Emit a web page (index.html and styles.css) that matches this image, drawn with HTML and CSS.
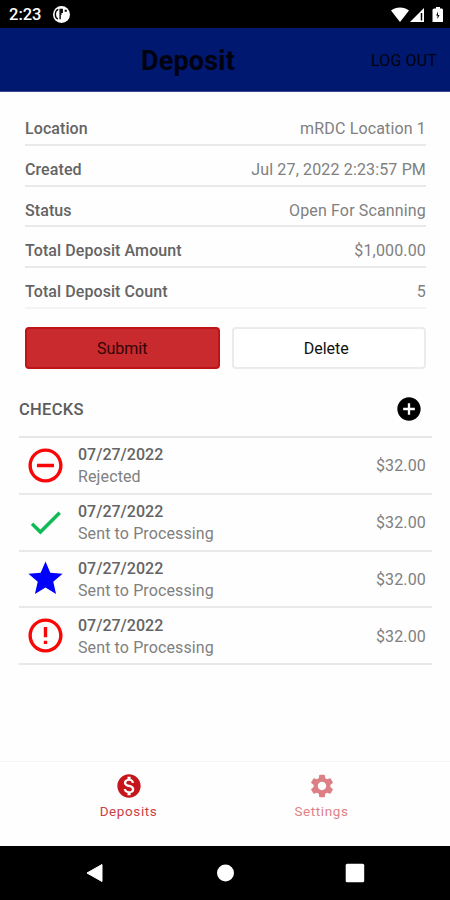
FILE: index.html
```html
<!DOCTYPE html>
<html lang="en">
<head>
    <meta charset="UTF-8">
    <meta name="viewport" content="width=device-width, initial-scale=1">
    <title>Deposit</title>
    <link rel="stylesheet" href="styles.css">
</head>
<body>

    <div class="status-bar">
        <span class="clock">2:23</span>
        <svg class="app-icon" viewBox="0 0 16 16">
            <circle cx="8" cy="8" r="8" fill="#fff"/>
            <path d="M6.700 2.500v10M5 3.200C3 4 2.200 6 2.200 8s.8 3.500 2.300 4.300" fill="none" stroke="#000" stroke-width="1.300"/>
            <path d="M7 2.500h2.300v4H8v2H7zM11 3.500h2v2h-2z" fill="#000"/>
        </svg>
        <svg class="status-icons" viewBox="0 0 52 16">
            <path d="M0 3.500C5 -.6 13 -.6 18 3.500L9 15z" fill="#fff"/>
            <path d="M33 1v14H19z" fill="#fff"/>
            <path d="M30.500 6v7.500" stroke="#000" stroke-width="1.500"/>
            <path d="M43 1.500h2V0h4v1.500h2l1 1V15H41.500V2.500z" fill="#fff"/>
            <path d="M47 4.500l-1.800 4h1.300V12l2-4H47z" fill="#000"/>
        </svg>
    </div>

    <div class="header">
        <h1>Deposit</h1>
        <a class="logout">LOG OUT</a>
    </div>

    <div class="content">
        <div class="details">
            <div class="detail-row"><b>Location</b><span>mRDC Location 1</span></div>
            <div class="detail-row"><b>Created</b><span>Jul 27, 2022 2:23:57 PM</span></div>
            <div class="detail-row"><b>Status</b><span>Open For Scanning</span></div>
            <div class="detail-row"><b>Total Deposit Amount</b><span>$1,000.00</span></div>
            <div class="detail-row"><b>Total Deposit Count</b><span>5</span></div>
        </div>

        <div class="buttons">
            <button class="submit">Submit</button>
            <button class="delete">Delete</button>
        </div>

        <div class="checks-header">
            <h2>CHECKS</h2>
            <svg class="add-icon" viewBox="0 0 24 24"><path d="M12 2C6.480 2 2 6.480 2 12s4.480 10 10 10 10-4.480 10-10S17.520 2 12 2zm5 11h-4v4h-2v-4H7v-2h4V7h2v4h4v2z"/></svg>
        </div>

        <div class="check-row">
            <svg class="check-icon red" viewBox="0 0 24 24"><path d="M7 11v2h10v-2H7zm5-9C6.480 2 2 6.480 2 12s4.480 10 10 10 10-4.480 10-10S17.520 2 12 2zm0 18c-4.410 0-8-3.590-8-8s3.590-8 8-8 8 3.590 8 8-3.590 8-8 8z"/></svg>
            <div class="check-info"><b>07/27/2022</b><span>Rejected</span></div>
            <span class="amount">$32.00</span>
        </div>
        <div class="check-row">
            <svg class="check-icon green" viewBox="0 0 24 24"><path d="M9 16.170L4.830 12l-1.420 1.410L9 19 21 7l-1.410-1.410z"/></svg>
            <div class="check-info"><b>07/27/2022</b><span>Sent to Processing</span></div>
            <span class="amount">$32.00</span>
        </div>
        <div class="check-row">
            <svg class="check-icon blue" viewBox="0 0 24 24"><path d="M12 17.270L18.180 21l-1.640-7.030L22 9.240l-7.190-.61L12 2 9.190 8.630 2 9.240l5.460 4.730L5.820 21z"/></svg>
            <div class="check-info"><b>07/27/2022</b><span>Sent to Processing</span></div>
            <span class="amount">$32.00</span>
        </div>
        <div class="check-row">
            <svg class="check-icon red" viewBox="0 0 24 24"><path d="M11 15h2v2h-2zm0-8h2v6h-2zm1-5C6.480 2 2 6.480 2 12s4.480 10 10 10 10-4.480 10-10S17.520 2 12 2zm0 18c-4.410 0-8-3.590-8-8s3.590-8 8-8 8 3.590 8 8-3.590 8-8 8z"/></svg>
            <div class="check-info"><b>07/27/2022</b><span>Sent to Processing</span></div>
            <span class="amount">$32.00</span>
        </div>
    </div>

    <div class="tabs">
        <div class="tab active">
            <svg viewBox="0 0 24 24"><path d="M12 2C6.480 2 2 6.480 2 12s4.480 10 10 10 10-4.480 10-10S17.520 2 12 2zm1.410 16.090V20h-2.670v-1.930c-1.710-.36-3.160-1.460-3.270-3.400h1.960c.1 1.050.82 1.870 2.650 1.870 1.960 0 2.400-.98 2.400-1.590 0-.83-.44-1.610-2.670-2.140-2.480-.6-4.180-1.620-4.180-3.670 0-1.720 1.390-2.840 3.110-3.210V4h2.670v1.950c1.860.45 2.790 1.860 2.850 3.390H14.300c-.05-1.110-.64-1.870-2.220-1.870-1.500 0-2.400.68-2.400 1.640 0 .84.65 1.390 2.670 1.910s4.180 1.390 4.180 3.910c-.01 1.830-1.380 2.830-3.120 3.160z"/></svg>
            <span>Deposits</span>
        </div>
        <div class="tab">
            <svg viewBox="0 0 24 24"><path d="M19.140 12.940c.04-.3.060-.61.060-.94 0-.32-.02-.64-.07-.94l2.030-1.580c.18-.14.230-.41.120-.61l-1.920-3.320c-.12-.22-.37-.29-.59-.22l-2.390.96c-.5-.38-1.030-.7-1.620-.94l-.36-2.540c-.04-.24-.24-.41-.48-.41h-3.840c-.24 0-.43.170-.47.410l-.36 2.540c-.59.240-1.130.570-1.620.940l-2.390-.96c-.22-.08-.47 0-.59.220L2.740 8.870c-.12.210-.08.470.120.610l2.030 1.580c-.05.300-.09.630-.09.940s.02.640.07.940l-2.030 1.580c-.18.140-.23.410-.12.610l1.920 3.320c.12.220.37.290.59.220l2.390-.96c.5.380 1.030.700 1.620.940l.36 2.540c.05.240.24.410.48.410h3.840c.24 0 .44-.17.470-.41l.36-2.540c.59-.24 1.130-.56 1.620-.94l2.390.96c.22.080.47 0 .59-.22l1.920-3.320c.12-.22.070-.47-.12-.61l-2.010-1.580zM12 15.600c-1.980 0-3.600-1.620-3.600-3.600s1.620-3.600 3.600-3.600 3.600 1.620 3.600 3.600-1.620 3.600-3.600 3.600z"/></svg>
            <span>Settings</span>
        </div>
    </div>

    <div class="nav-bar">
        <svg viewBox="0 0 20 20"><path d="M2 10L17 1.500v17z" stroke="#fff" stroke-linejoin="round"/></svg>
        <svg viewBox="0 0 20 20"><circle cx="10.500" cy="10" r="8.500"/></svg>
        <svg viewBox="0 0 20 20"><rect x=".7" y=".7" width="18.500" height="18.500" rx="1.500"/></svg>
    </div>

</body>
</html>
```

FILE: styles.css
```css
* {
    box-sizing: border-box;
}
body {
    margin: 0;
    height: 900px;
    display: flex;
    flex-direction: column;
    font-family: Roboto, sans-serif;
    font-size: 16px;
    color: #808080;
    background: #fefefe;
    overflow: hidden;
}
b {
    font-weight: 500;
    color: #646464;
}
.status-bar {
    height: 28px;
    display: flex;
    align-items: center;
    padding: 1px 7px 0 9px;
    background: #000;
}
.clock {
    color: #fff;
    font-size: 16.5px;
    font-weight: 500;
}
.app-icon {
    width: 17px;
    height: 17px;
    margin-left: 12px;
}
.status-icons {
    width: 52px;
    height: 16px;
    margin-left: auto;
}
.header {
    height: 64px;
    display: grid;
    grid-template-columns: 1fr auto 1fr;
    align-items: center;
    padding: 2px 13px 0 0;
    background: #00186f;
    border-bottom: 1px solid #3b4a8e;
    color: #00020f;
}
.header h1 {
    grid-column: 2;
    margin: 0 0 0 -61px;
    font-size: 27px;
    font-weight: 700;
    letter-spacing: 0.2px;
}
.logout {
    text-align: right;
    font-size: 16px;
    letter-spacing: 0.15px;
}
.content {
    flex: 1;
    padding: 13px 18px 0 19px;
}
.details {
    padding: 0 6px;
}
.detail-row {
    height: 40.8px;
    display: flex;
    justify-content: space-between;
    align-items: center;
    padding-top: 8.4px;
    border-bottom: 2px solid #e9e9e9;
    letter-spacing: 0.15px;
}
.detail-row b {
    letter-spacing: 0.08px;
}
.detail-row:last-child {
    border-bottom-color: #f4f4f4;
}
.buttons {
    display: grid;
    grid-template-columns: 1fr 1fr;
    gap: 12px;
    padding: 18px 6px 0;
}
.buttons button {
    height: 42px;
    padding: 2px 0 0;
    border-radius: 4px;
    font-family: inherit;
    font-size: 16px;
}
.buttons .submit {
    background: #c82a2e;
    border: 2px solid #c01318;
    color: #310405;
}
.buttons .delete {
    background: #fff;
    border: 2px solid #ebebeb;
    color: #111;
    padding-right: 5px;
}
.checks-header {
    height: 69px;
    display: flex;
    justify-content: space-between;
    align-items: center;
    padding: 13px 9px 0 0;
    border-bottom: 2px solid #e6e6e6;
}
.checks-header h2 {
    margin: 0;
    padding-top: 1px;
    font-size: 16.5px;
    font-weight: 500;
    letter-spacing: 0.3px;
    color: #5c5c5c;
}
.add-icon {
    width: 28px;
    height: 28px;
}
.check-row {
    height: 56.8px;
    display: flex;
    align-items: center;
    padding: 0 6px 0 6px;
    border-bottom: 2px solid #e9e9e9;
}
.check-icon {
    width: 41px;
    height: 41px;
    margin-right: 12px;
}
.red {
    fill: #f90606;
}
.green {
    fill: #0fbb55;
}
.blue {
    fill: #0000fe;
}
.check-info {
    flex: 1;
    display: flex;
    flex-direction: column;
    padding-top: 2px;
    line-height: 22px;
    letter-spacing: 0.12px;
}
.check-info b {
    letter-spacing: 0;
}
.amount {
    padding-top: 1px;
    letter-spacing: 0.15px;
}
.tabs {
    height: 85px;
    display: flex;
    padding: 10px 32px 0;
    border-top: 1px solid #f6f6f6;
}
.tab {
    flex: 1;
    display: flex;
    flex-direction: column;
    align-items: center;
    color: #dd8085;
    fill: currentColor;
    font-size: 13.5px;
    letter-spacing: 0.6px;
}
.tab svg {
    width: 28px;
    height: 28px;
    margin-bottom: 3px;
}
.tab.active {
    color: #c5161b;
}
.tab.active span {
    color: #cc4046;
}
.nav-bar {
    height: 54px;
    display: flex;
    justify-content: space-between;
    align-items: center;
    padding: 0 85px;
    background: #000;
    fill: #fff;
}
.nav-bar svg {
    width: 20px;
    height: 20px;
}
```
